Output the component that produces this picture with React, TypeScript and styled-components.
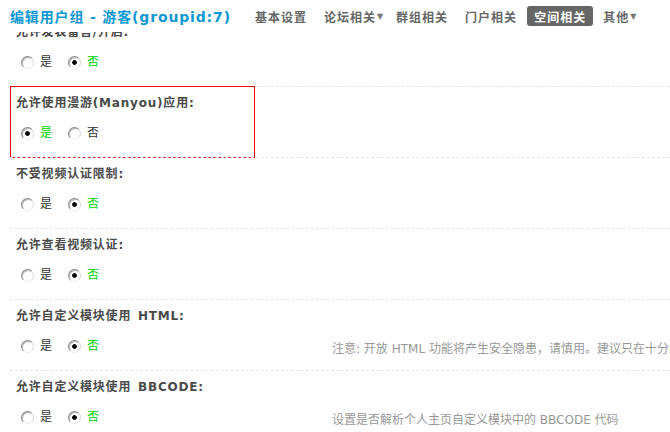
import React from 'react';
import styled, { createGlobalStyle } from 'styled-components';

const GlobalStyle = createGlobalStyle`
  html, body {
    margin: 0;
    padding: 0;
    overflow: hidden;
    background: #fff;
  }
  body {
    font: 12px "DejaVu Sans", "Noto Sans CJK SC", sans-serif;
    color: #333;
  }
`;

interface IOption {
  label: string;
  checked: boolean;
}

interface ISetting {
  id: string;
  title: string;
  tip?: string;
  yes: boolean;
  highlight?: boolean;
}

const navList = [
  { name: '基本设置' },
  { name: '论坛相关', menu: true },
  { name: '群组相关' },
  { name: '门户相关' },
  { name: '空间相关', active: true },
  { name: '其他', menu: true },
];

const settings: ISetting[] = [
  { id: 'allowcomment', title: '允许发表留言/开启:', yes: false },
  { id: 'allowmyop', title: '允许使用漫游(Manyou)应用:', yes: true, highlight: true },
  { id: 'videophotoignore', title: '不受视频认证限制:', yes: false },
  { id: 'allowviewvideophoto', title: '允许查看视频认证:', yes: false },
  {
    id: 'allowspacediyhtml',
    title: '允许自定义模块使用\u2002HTML:',
    yes: false,
    tip: '注意: 开放 HTML 功能将产生安全隐患，请慎用。建议只在十分必要的情况下使用，并限制只开放给最核心的管理人员',
  },
  {
    id: 'allowspacediybbcode',
    title: '允许自定义模块使用\u2002BBCODE:',
    yes: false,
    tip: '设置是否解析个人主页自定义模块中的 BBCODE 代码',
  },
];

const RadioGroup = ({ name, options }: { name: string; options: IOption[] }) => (
  <RadioList>
    {options.map((item) => (
      <RadioItem key={item.label}>
        <Radio type="radio" name={name} defaultChecked={item.checked} />
        <RadioLabel checked={item.checked}>{item.label}</RadioLabel>
      </RadioItem>
    ))}
  </RadioList>
);

const App = () => {
  return (
    <>
      <GlobalStyle />
      <Header>
        <Title>编辑用户组 - 游客(groupid:7)</Title>
        <Nav>
          {navList.map((item) => (
            <NavItem key={item.name} active={item.active} menu={item.menu}>
              {item.name}
              {item.menu && <Arrow>▼</Arrow>}
            </NavItem>
          ))}
        </Nav>
      </Header>
      <Content>
        {settings.map((item) => (
          <Section key={item.id} highlight={item.highlight}>
            <SettingTitle>{item.title}</SettingTitle>
            <SettingRow>
              <RadioCell>
                <RadioGroup
                  name={item.id}
                  options={[
                    { label: '是', checked: item.yes },
                    { label: '否', checked: !item.yes },
                  ]}
                />
              </RadioCell>
              {item.tip && <Tip>{item.tip}</Tip>}
            </SettingRow>
          </Section>
        ))}
      </Content>
    </>
  );
};

const Header = styled.div`
  position: fixed;
  top: 0;
  left: 0;
  right: 0;
  z-index: 10;
  height: 32px;
  display: flex;
  align-items: center;
  padding-left: 10px;
  background: #fff;
  white-space: nowrap;
`;

const Title = styled.h3`
  margin: 0;
  font-size: 14px;
  font-weight: bold;
  letter-spacing: 0.85px;
  color: #0a98d4;
`;

const Nav = styled.ul`
  display: flex;
  align-items: center;
  gap: 3px;
  margin: 0 0 0 17px;
  padding: 0;
  list-style: none;
`;

const NavItem = styled.li<{ active?: boolean; menu?: boolean }>`
  display: flex;
  align-items: center;
  height: 20px;
  padding: 0 ${(p) => (p.menu ? '2px' : '7px')} 0 7px;
  border-radius: 3px;
  font-size: 12px;
  font-weight: bold;
  letter-spacing: 1px;
  color: ${(p) => (p.active ? '#fff' : '#666')};
  background: ${(p) => (p.active ? '#666' : 'transparent')};
`;

const Arrow = styled.span`
  margin-left: 1px;
  font-size: 8px;
  color: #777;
`;

const Content = styled.div`
  padding: 15px 0 0 10px;
`;

const Section = styled.div<{ highlight?: boolean }>`
  position: relative;
  border-top: 1px dashed #dfe8ef;

  ${(p) =>
    p.highlight &&
    `
    &::after {
      content: '';
      position: absolute;
      top: -1px;
      left: 0;
      width: 245px;
      height: calc(100% + 2px);
      box-sizing: border-box;
      border: 1px solid #f00;
      pointer-events: none;
    }
  `}
`;

const SettingTitle = styled.div`
  padding: 7px 6px 3px;
  line-height: 18px;
  font-weight: bold;
  letter-spacing: 0.8px;
  color: #4a4a4a;
  white-space: nowrap;
`;

const SettingRow = styled.div`
  display: flex;
  align-items: flex-start;
  height: 18px;
  padding: 9px 0 15px;
  line-height: 18px;
`;

const RadioCell = styled.div`
  flex: 0 0 316px;
  padding-left: 11px;
  box-sizing: border-box;
`;

const RadioList = styled.div`
  display: flex;
  align-items: center;
`;

const RadioItem = styled.label`
  display: flex;
  align-items: center;
  margin-right: 16px;
`;

const Radio = styled.input`
  appearance: none;
  width: 13px;
  height: 13px;
  margin: 0 6px 0 0;
  border-radius: 50%;
  border: 1px solid;
  border-color: #8a8a8a #d8d8d8 #ececec #8a8a8a;
  box-sizing: border-box;
  background: #fff;
  box-shadow: inset 1px 1px 0 #b8b8b8;

  &:checked {
    background: radial-gradient(circle at 50% 50%, #000 0 2px, #fff 2.6px);
  }
`;

const RadioLabel = styled.span<{ checked: boolean }>`
  color: ${(p) => (p.checked ? '#00d400' : '#333')};
`;

const Tip = styled.div`
  padding: 3px 0 0 6px;
  color: #999;
  white-space: nowrap;
`;

export default App;
